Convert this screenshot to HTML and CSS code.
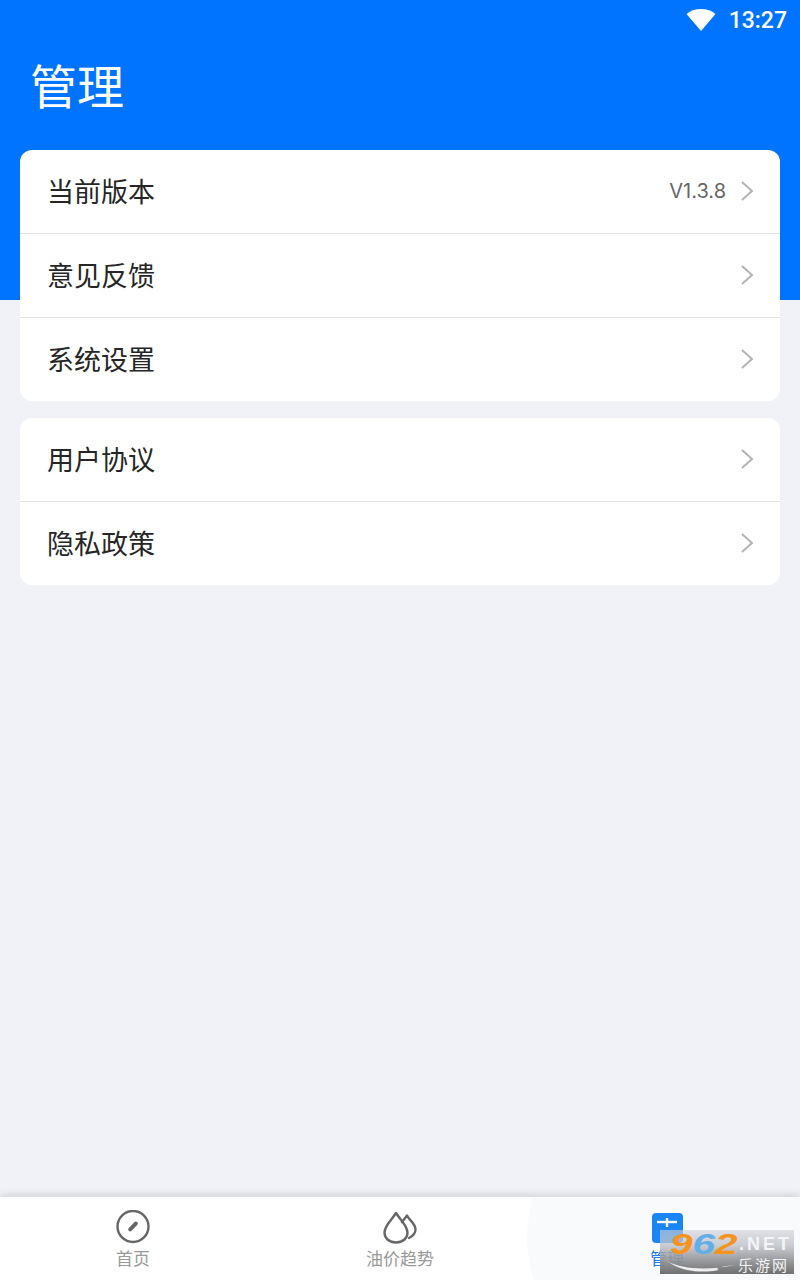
FILE: index.html
```html
<!DOCTYPE html>
<html>
<head>
	<title>管理</title>
	<link rel="stylesheet" href="styles.css">
</head>
<body>
	<div class="page">
		<header class="top">
			<div class="status">
				<svg class="wifi" width="30" height="24" viewBox="0 0 30 24"><path d="M0.5 6C4.500 2.800 9.500 1 15 1s10.500 1.800 14.500 5L15 23z" fill="#fff"/></svg>
				<span class="clock">13:27</span>
			</div>
			<h1 class="title">管理</h1>
		</header>

		<main class="content">
			<ul class="card">
				<li class="row">
					<span class="label">当前版本</span>
					<span class="value">V1.3.8</span>
					<svg class="arrow" width="14" height="22" viewBox="0 0 14 22"><path d="M2 2l10 9-10 9" fill="none" stroke="#b3b3b3" stroke-width="2"/></svg>
				</li>
				<li class="row">
					<span class="label">意见反馈</span>
					<svg class="arrow" width="14" height="22" viewBox="0 0 14 22"><path d="M2 2l10 9-10 9" fill="none" stroke="#b3b3b3" stroke-width="2"/></svg>
				</li>
				<li class="row">
					<span class="label">系统设置</span>
					<svg class="arrow" width="14" height="22" viewBox="0 0 14 22"><path d="M2 2l10 9-10 9" fill="none" stroke="#b3b3b3" stroke-width="2"/></svg>
				</li>
			</ul>
			<ul class="card">
				<li class="row">
					<span class="label">用户协议</span>
					<svg class="arrow" width="14" height="22" viewBox="0 0 14 22"><path d="M2 2l10 9-10 9" fill="none" stroke="#b3b3b3" stroke-width="2"/></svg>
				</li>
				<li class="row">
					<span class="label">隐私政策</span>
					<svg class="arrow" width="14" height="22" viewBox="0 0 14 22"><path d="M2 2l10 9-10 9" fill="none" stroke="#b3b3b3" stroke-width="2"/></svg>
				</li>
			</ul>
		</main>

		<nav class="tabs">
			<div class="ripple"></div>
			<div class="tab">
				<svg width="36" height="34" viewBox="0 0 36 34">
					<circle cx="18" cy="16.500" r="15.500" fill="none" stroke="#666" stroke-width="2.400"/>
					<path d="M15.200 19.300l5.600-5.600" fill="none" stroke="#666" stroke-width="4" stroke-linecap="round"/>
				</svg>
				<span>首页</span>
			</div>
			<div class="tab">
				<svg width="36" height="34" viewBox="0 0 36 34">
					<path d="M14 3C10 9.500 2.500 15.500 2.500 22.500 2.500 28.500 7.500 32.500 14 32.500S25.500 28.500 25.500 22.500C25.500 15.500 18 9.500 14 3z" fill="none" stroke="#666" stroke-width="2.400" stroke-linejoin="round"/>
					<path d="M20 12L25 5.500C27 10 33.500 13.500 33.500 19.500 33.500 23 31 26 27 28" fill="none" stroke="#666" stroke-width="2.400" stroke-linecap="round" stroke-linejoin="round"/>
				</svg>
				<span>油价趋势</span>
			</div>
			<div class="tab tab-active">
				<svg width="36" height="34" viewBox="0 0 36 34">
					<rect x="3" y="3" width="31" height="30" rx="4" fill="#1a86f5"/>
					<path d="M8 12h20" stroke="#fff" stroke-width="2.400"/>
					<path d="M18 8v9" stroke="#fff" stroke-width="2.400"/>
				</svg>
				<span>管理</span>
			</div>
			<div class="mark">
				<div class="mark-top"><b class="mark-num">9<i>6</i>2</b><b class="mark-net">.NET</b></div>
				<div class="mark-sub">乐游网</div>
				<svg class="mark-swoosh" width="70" height="12" viewBox="0 0 70 12"><path d="M0 1C14 9 40 11 68 5 50 7 48 9 52 10 30 14 12 10 0 1z" fill="#eee"/></svg>
			</div>
		</nav>
	</div>
</body>
</html>
```

FILE: styles.css
```css
* {
  box-sizing: border-box;
}

body {
  margin: 0;
  font-family: "Noto Sans CJK SC", "Noto Sans", sans-serif;
  color: #262626;
}

.page {
  width: 800px;
  height: 1280px;
  background-color: #f0f2f7;
  display: flex;
  flex-direction: column;
  overflow: hidden;
}

/* header */
.top {
  height: 300px;
  flex: none;
  background-color: #0073ff;
  color: #fff;
}

.status {
  height: 40px;
  padding-right: 13px;
  display: flex;
  justify-content: flex-end;
  align-items: center;
}

.wifi {
  margin-right: 13px;
}

.clock {
  font-family: Roboto, sans-serif;
  font-size: 23px;
  font-weight: 500;
}

.title {
  margin: 15px 0 0 30px;
  font-size: 47px;
  font-weight: 400;
  line-height: 58px;
}

/* list */
.content {
  margin-top: -150px;
  padding: 0 20px;
}

.card {
  list-style-type: none;
  margin: 0 0 17px;
  padding: 0;
  background-color: #fff;
  border-radius: 12px;
}

.row {
  height: 84px;
  padding: 0 26px 2px 27px;
  display: flex;
  align-items: center;
  border-bottom: 1px solid #e4e4e4;
}

.row:last-child {
  height: 83px;
  border-bottom: none;
}

.label {
  flex: 1;
  font-size: 27px;
}

.value {
  margin-right: 14px;
  font-family: Inter, Roboto, sans-serif;
  font-size: 20px;
  color: #666;
}

/* bottom tabs */
.tabs {
  position: relative;
  margin-top: auto;
  height: 83px;
  flex: none;
  background-color: #fff;
  box-shadow: 0 -2px 8px rgba(0, 0, 0, 0.14);
  display: grid;
  grid-template-columns: 266px 268px 266px;
  overflow: hidden;
}

.ripple {
  position: absolute;
  left: 527px;
  top: -100px;
  width: 280px;
  height: 280px;
  border-radius: 50%;
  background-color: #f9fafb;
}

.tab {
  position: relative;
  padding-top: 13px;
  display: flex;
  flex-direction: column;
  align-items: center;
  font-size: 17px;
  line-height: 24px;
  color: #999;
}

.tab span {
  margin-top: 2px;
}

.tab-active {
  color: #1a7ee8;
}

/* watermark */
.mark {
  position: absolute;
  left: 660px;
  top: 33px;
  width: 134px;
  height: 44px;
  padding: 3px 0 0 10px;
  background: linear-gradient(rgba(205, 208, 216, 0.6), rgba(190, 193, 200, 0.8) 35%, #6f6f6f);
  color: #f4f4f4;
  font-family: "Liberation Sans", sans-serif;
}

.mark-top {
  height: 22px;
  display: flex;
  align-items: center;
}

.mark-num {
  width: 69px;
  font-size: 30px;
  line-height: 22px;
  font-style: italic;
  color: #f5931e;
  transform: scaleX(1.35);
  transform-origin: left center;
}

.mark-num i {
  color: #62aee6;
}

.mark-net {
  font-size: 18px;
  letter-spacing: 3px;
}

.mark-sub {
  margin: 1px 0 0 68px;
  font-family: "Noto Sans CJK SC", sans-serif;
  font-size: 15px;
  letter-spacing: 2px;
  line-height: 17px;
  white-space: nowrap;
}

.mark-swoosh {
  position: absolute;
  left: 7px;
  top: 30px;
}
```
